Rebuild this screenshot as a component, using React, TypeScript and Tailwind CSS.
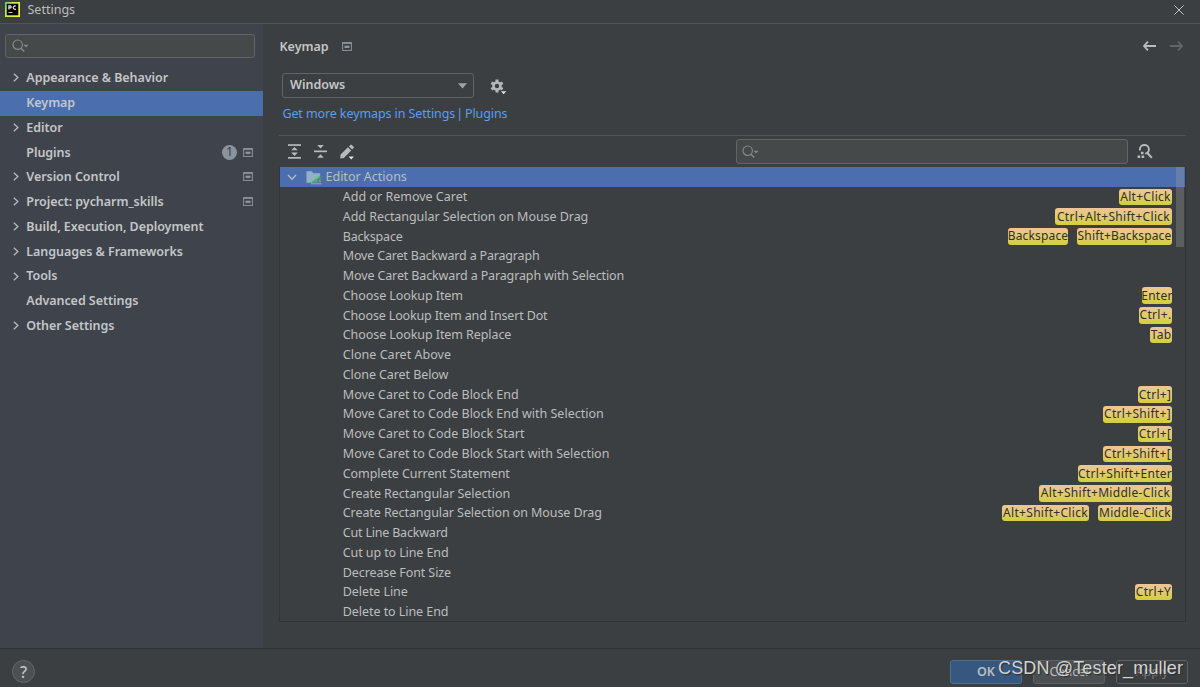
import React from "react";

type NavItem = { label: string; arrow?: boolean; badge?: string; project?: boolean; selected?: boolean };

const nav: NavItem[] = [
  { label: "Appearance & Behavior", arrow: true },
  { label: "Keymap", selected: true },
  { label: "Editor", arrow: true },
  { label: "Plugins", badge: "1", project: true },
  { label: "Version Control", arrow: true, project: true },
  { label: "Project: pycharm_skills", arrow: true, project: true },
  { label: "Build, Execution, Deployment", arrow: true },
  { label: "Languages & Frameworks", arrow: true },
  { label: "Tools", arrow: true },
  { label: "Advanced Settings" },
  { label: "Other Settings", arrow: true },
];

type Shortcut = [keys: string, width: number];

const actions: { name: string; tracking?: string; keys?: Shortcut[] }[] = [
  { name: "Add or Remove Caret", keys: [["Alt+Click", 53]] },
  { name: "Add Rectangular Selection on Mouse Drag", tracking: "tracking-[-0.05px]", keys: [["Ctrl+Alt+Shift+Click", 117]] },
  { name: "Backspace", tracking: "tracking-[-0.2px]", keys: [["Backspace", 60], ["Shift+Backspace", 95]] },
  { name: "Move Caret Backward a Paragraph", tracking: "tracking-[-0.18px]" },
  { name: "Move Caret Backward a Paragraph with Selection", tracking: "tracking-[-0.13px]" },
  { name: "Choose Lookup Item", tracking: "tracking-[-0.08px]", keys: [["Enter", 30]] },
  { name: "Choose Lookup Item and Insert Dot", tracking: "tracking-[-0.15px]", keys: [["Ctrl+.", 33]] },
  { name: "Choose Lookup Item Replace", tracking: "tracking-[-0.08px]", keys: [["Tab", 22]] },
  { name: "Clone Caret Above", tracking: "tracking-[0.03px]" },
  { name: "Clone Caret Below", tracking: "tracking-[-0.08px]" },
  { name: "Move Caret to Code Block End", keys: [["Ctrl+]", 34]] },
  { name: "Move Caret to Code Block End with Selection", keys: [["Ctrl+Shift+]", 69]] },
  { name: "Move Caret to Code Block Start", keys: [["Ctrl+[", 34]] },
  { name: "Move Caret to Code Block Start with Selection", keys: [["Ctrl+Shift+[", 69]] },
  { name: "Complete Current Statement", tracking: "tracking-[-0.08px]", keys: [["Ctrl+Shift+Enter", 94]] },
  { name: "Create Rectangular Selection", tracking: "tracking-[-0.06px]", keys: [["Alt+Shift+Middle-Click", 133]] },
  { name: "Create Rectangular Selection on Mouse Drag", tracking: "tracking-[-0.08px]", keys: [["Alt+Shift+Click", 87], ["Middle-Click", 74]] },
  { name: "Cut Line Backward", tracking: "tracking-[-0.2px]" },
  { name: "Cut up to Line End", tracking: "tracking-[-0.1px]" },
  { name: "Decrease Font Size", tracking: "tracking-[-0.1px]" },
  { name: "Delete Line", tracking: "tracking-[-0.08px]", keys: [["Ctrl+Y", 37]] },
  { name: "Delete to Line End", tracking: "tracking-[-0.06px]" },
];

function PyCharmIcon() {
  return (
    <svg width="15" height="15" viewBox="0 0 15 15">
      <defs>
        <linearGradient id="pc" x1="0" y1="0" x2="1" y2="0.6">
          <stop offset="0" stopColor="#2fd67c" />
          <stop offset="0.3" stopColor="#b8ee45" />
          <stop offset="1" stopColor="#f5f33c" />
        </linearGradient>
      </defs>
      <rect width="15" height="15" fill="url(#pc)" />
      <rect x="1.7" y="1.7" width="11.6" height="11.6" fill="#050505" />
      <path d="M3.9 7.5V3.9h1.3a1 1 0 0 1 0 2H4M10.8 4.3a1.6 1.6 0 1 0 0 2.6" fill="none" stroke="#e8e8e8" strokeWidth="1.2" />
      <rect x="3.5" y="10" width="4" height="1" fill="#c8c8c8" />
    </svg>
  );
}

function ProjectIcon() {
  return (
    <svg width="10" height="9" viewBox="0 0 10 9" fill="none">
      <rect x="0.6" y="0.6" width="8.8" height="7.8" stroke="#8b949c" strokeWidth="1" />
      <path d="M0.6 1.2h8.8" stroke="#8b949c" strokeWidth="1.4" />
      <rect x="2.5" y="3.6" width="5" height="2.4" fill="#8b949c" />
    </svg>
  );
}

function SearchIcon() {
  return (
    <svg width="17" height="14" viewBox="0 0 17 14" fill="none">
      <circle cx="5.7" cy="5.7" r="4.7" stroke="#83898c" strokeWidth="1.2" />
      <path d="M9 9.2l3.2 3.3" stroke="#83898c" strokeWidth="1.5" />
      <path d="M11.5 5.8h5l-2.5 2.8z" fill="#83898c" />
    </svg>
  );
}

function Chevron() {
  return (
    <svg width="6" height="9" viewBox="0 0 6 9" fill="none" className="-mt-px">
      <path d="M0.8 0.7L4.9 4.5L0.8 8.3" stroke="#b6b9bc" strokeWidth="1.3" />
    </svg>
  );
}

function GearIcon() {
  return (
    <svg width="17" height="16" viewBox="0 0 17 16">
      <g transform="translate(7 7)" fill="#b4b7b9">
        <circle r="3.5" fill="none" stroke="#b4b7b9" strokeWidth="2.6" />
        <rect x="-1.5" y="-6.5" width="3" height="3" />
        <rect x="-1.5" y="-6.5" width="3" height="3" transform="rotate(60)" />
        <rect x="-1.5" y="-6.5" width="3" height="3" transform="rotate(120)" />
        <rect x="-1.5" y="-6.5" width="3" height="3" transform="rotate(180)" />
        <rect x="-1.5" y="-6.5" width="3" height="3" transform="rotate(240)" />
        <rect x="-1.5" y="-6.5" width="3" height="3" transform="rotate(300)" />
      </g>
      <path d="M10 11.5h7v1l-3.2 3h-.6L10 12.5z" fill="#3c3f41" />
      <path d="M11 12.2h5.2l-2.6 3z" fill="#e4e5e6" />
    </svg>
  );
}

function Toolbar() {
  return (
    <div className="flex items-center">
      <svg width="13" height="15" viewBox="0 0 13 15" fill="#b7babc">
        <rect y="0.2" width="13" height="1.7" />
        <rect y="13" width="13" height="1.7" />
        <path d="M6.5 3l3.3 3.3H3.2zM6.5 11.9L3.2 8.6h6.6z" />
      </svg>
      <svg className="ml-[13px]" width="13" height="15" viewBox="0 0 13 15" fill="#b7babc">
        <rect y="6.5" width="13" height="1.7" />
        <path d="M3.2 1h6.6L6.5 4.6zM3.2 13.8h6.6L6.5 10.2z" />
      </svg>
      <svg className="ml-[13px]" width="15" height="16" viewBox="0 0 15 16" fill="#b7babc">
        <path d="M0.2 14.4l.4-3.9L7.9 3.3l3.3 3.3L3.9 13.9zM8.9 2.4l1.5-1.5a1 1 0 0 1 1.4 0l1.8 1.8a1 1 0 0 1 0 1.4L12.2 5.6z" />
        <path d="M8.6 12.5h5.3l-2.6 2.9z" fill="#e4e5e6" />
      </svg>
    </div>
  );
}

function FindShortcutIcon() {
  return (
    <svg width="16" height="15" viewBox="0 0 16 15" fill="none">
      <path d="M2.9 6.6V5.2A4.5 4.2 0 0 1 11.9 5.2A4.5 4.4 0 0 1 8.2 9.6" stroke="#b7babc" strokeWidth="1.9" />
      <path d="M10.2 8.8l4.6 5.1" stroke="#b7babc" strokeWidth="2.1" />
      <path d="M3.9 7.8h2.6v2.4H3.9zM0.6 11.6h2.6V14H0.6zM4.6 11.6h2.6V14H4.6z" fill="#b7babc" />
    </svg>
  );
}

function FolderIcon() {
  return (
    <svg width="16" height="15" viewBox="0 0 16 15">
      <path d="M0.5 1.2h5.3l1.7 2h6.7v9.5H0.5z" fill="#91b1c4" />
      <path d="M5.2 13L14.8 4.8v8.7H5.2z" fill="#5681a8" />
      <path d="M5 13.8h10.5" stroke="#8db4cf" strokeWidth="0.9" />
      <path d="M6 10.8l1.6 1.3M9.2 11.7l1.5-1.5M10 9l3.6-2.8" stroke="#45d24a" strokeWidth="1.6" fill="none" />
      <rect x="13" y="10.2" width="1.7" height="1.7" fill="#ed713d" />
    </svg>
  );
}

function ShortcutChip({ keys, width }: { keys: string; width: number }) {
  return (
    <span
      style={{ width }}
      className={`flex h-[16.5px] shrink-0 items-center justify-center rounded-[3px] bg-linear-to-b from-[#efc598] to-[#d3cf36] text-[12px] leading-none whitespace-nowrap text-[#30312c] ${keys.includes("Backspace") ? "tracking-[0.15px]" : "tracking-[0.3px]"}`}
    >
      {keys}
    </span>
  );
}

export default function App() {
  return (
    <div className="flex h-[687px] w-[1200px] flex-col overflow-hidden bg-[#3c3f41] font-['Noto_Sans','Open_Sans',sans-serif] text-[12.5px] text-[#bbbdbf]">
      <header className="flex h-6 shrink-0 items-center border-b border-[#515456] pr-4 pb-1 pl-[5px]">
        <PyCharmIcon />
        <span className="ml-[7.5px] leading-5">Settings</span>
        <svg className="ml-auto" width="10" height="10" viewBox="0 0 10 10">
          <path d="M0.4 0.4l9.2 9.2M9.6 0.4L0.4 9.6" stroke="#c0c2c3" strokeWidth="1" />
        </svg>
      </header>

      <div className="flex min-h-0 flex-1">
        <aside className="w-[263px] shrink-0 bg-[#3f434c]">
          <div className="mt-[10px] ml-[5px] flex h-6 w-[250px] items-center rounded-[3px] border border-[#616567] bg-[#45494a] pl-[6px]">
            <SearchIcon />
          </div>
          <nav className="mt-2 text-[12.5px] font-semibold tracking-[-0.05px] text-[#c4c6c8]">
            {nav.map((item) => (
              <div key={item.label} className={`flex h-[24.78px] items-center pr-[10px] pl-[13px] ${item.selected ? "bg-[#4b6eaf]" : ""}`}>
                <span className="w-[13.3px] shrink-0">{item.arrow && <Chevron />}</span>
                <span className="pt-[0.6px] whitespace-nowrap">{item.label}</span>
                <span className="ml-auto flex items-center gap-[6px]">
                  {item.badge && (
                    <span className="flex size-[15px] items-center justify-center rounded-full bg-[#89949e] text-[12.5px] leading-none font-normal text-[#3c3f41]">{item.badge}</span>
                  )}
                  {item.project && <span className="-mt-px"><ProjectIcon /></span>}
                </span>
              </div>
            ))}
          </nav>
        </aside>

        <main className="flex min-w-0 flex-1 flex-col pr-[14px] pl-[16px]">
          <div className="mt-[12.5px] flex h-5 items-center pr-[3px]">
            <h1 className="ml-[0.5px] pt-[1.2px] font-semibold text-[#c4c6c8]">Keymap</h1>
            <span className="ml-[13px]"><ProjectIcon /></span>
            <svg className="ml-auto -mt-px" width="40" height="10" viewBox="0 0 40 10" fill="none" strokeWidth="1.8">
              <path d="M5 0.7L1 5l4 4.3M1 5h12" stroke="#b9bbbd" />
              <path d="M35 0.7L39 5l-4 4.3M39 5H27" stroke="#626567" />
            </svg>
          </div>
          <div className="mt-[16.5px] ml-[3px] flex h-[25px] items-center">
            <div className="flex h-[25px] w-[192px] items-center justify-between rounded-[3px] border border-[#616567] pr-[6px] pl-[7px] font-semibold text-[#c4c6c8]">
              Windows
              <svg width="9" height="6" viewBox="0 0 9 6"><path d="M0 0.3h9L4.5 5.6z" fill="#a0a3a5" /></svg>
            </div>
            <span className="mt-[2px] ml-[16px]"><GearIcon /></span>
          </div>
          <div className="mt-[6px] ml-[3.4px] flex h-5 items-center tracking-[-0.1px] whitespace-nowrap text-[#589df6]">
            <span>Get more keymaps in Settings</span>
            <span className="ml-[1px]">|</span>
            <span className="ml-[2px]">Plugins</span>
          </div>
          <div className="mt-[11px] h-px bg-[#515456]" />
          <div className="flex h-[31px] shrink-0 items-center pr-[33px] pl-[9px]">
            <Toolbar />
            <div className="ml-auto flex h-[25px] w-[392px] items-center rounded-[3px] border border-[#616567] bg-[#45494a] pl-[5px]">
              <SearchIcon />
            </div>
            <span className="ml-[9px]"><FindShortcutIcon /></span>
          </div>

          <section className="relative h-[455px] w-[907px] shrink-0 border border-t-0 border-[#323537]">
            <div className="flex h-[20px] items-center bg-[#4b6eaf] pl-[7px]">
              <svg width="10" height="7" viewBox="0 0 10 7" fill="none"><path d="M1 1l4 4.2L9 1" stroke="#b6bdc8" strokeWidth="1.3" /></svg>
              <span className="ml-[9px]"><FolderIcon /></span>
              <span className="ml-[3.5px] pt-px">Editor Actions</span>
            </div>
            {actions.map((action) => (
              <div key={action.name} className="flex h-[19.78px] items-center justify-between pr-[13px] pl-[62.8px]">
                <span className={`pt-[1.1px] whitespace-nowrap ${action.tracking ?? ""}`}>{action.name}</span>
                <span className="flex gap-[9px]">
                  {action.keys?.map(([keys, width]) => <ShortcutChip key={keys} keys={keys} width={width} />)}
                </span>
              </div>
            ))}
            <div className="absolute top-0 right-px h-20 w-2 bg-[#a6a6a6]/30" />
          </section>
        </main>
      </div>

      <footer className="relative flex h-[39px] shrink-0 items-start border-t border-[#313436] pt-[11px] pr-3 pl-3">
        <span className="flex size-[23px] items-center justify-center rounded-full border border-[#65686a] bg-[#4c5052] text-[16px] leading-none font-medium text-[#c4c6c8]">?</span>
        <div className="ml-auto flex gap-[11px]">
          <button className="h-6 w-[72px] rounded-[3px] border border-[#4c708c] bg-[#365880] font-semibold">OK</button>
          <button className="h-6 w-[72px] rounded-[3px] border border-[#5e6062] bg-[#4c5052]">Cancel</button>
          <button className="h-6 w-[72px] rounded-[3px] border border-[#5e6062] text-[#777a7c]">Apply</button>
        </div>
        <span className="absolute top-[8px] left-[998px] font-['Liberation_Sans',sans-serif] text-[18px] leading-[22px] tracking-[0.15px] whitespace-nowrap text-[#d2d3d4] [text-shadow:1px_1px_1px_#292b2c]">CSDN @Tester_muller</span>
      </footer>
    </div>
  );
}
